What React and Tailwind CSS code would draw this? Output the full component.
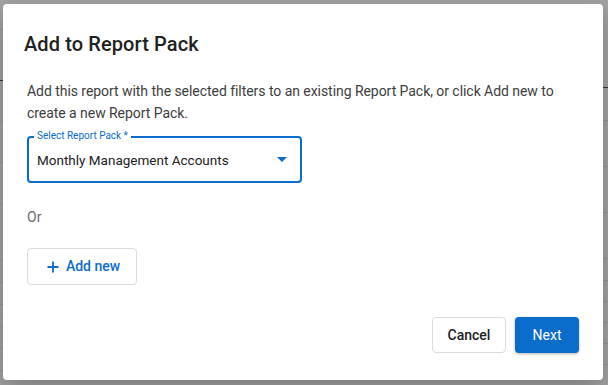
import React from "react";

function CaretDown() {
  return (
    <svg width="10" height="5" viewBox="0 0 10 5" className="block">
      <path d="M0 0 L10 0 L5 5 Z" fill="#0a6ccb" />
    </svg>
  );
}

// faint table rows of the page behind the dialog
const leftRows = [30, 51, 41, 41, 42, 56, 22, 22, 22, 22, 22];
const rightRows = [88, 33, 46, 46, 46, 22, 21, 21, 21, 21, 21];

function Backdrop() {
  return (
    <div className="absolute inset-0 bg-[#a3a3a3] flex flex-col">
      <div className="flex h-[4px] overflow-hidden text-[13px] leading-[13px] text-[#2e2e3a]">
        <div className="w-[395px] pl-[250px] -mt-[9px] border-r border-[#8e8e8e]">Feb 23</div>
        <div className="pl-[84px] -mt-[9px]">Mar 23</div>
      </div>
      <div className="flex flex-1 justify-between">
        <div className="w-[3px] flex flex-col">
          {leftRows.map((h, i) => (
            <div
              key={i}
              className={i === 1 ? "border-b border-[#30304a]" : "border-b border-[#959595]"}
              style={{ height: h }}
            />
          ))}
        </div>
        <div className="w-[6px] flex flex-col">
          {rightRows.map((h, i) => (
            <div
              key={i}
              className={i === 0 ? "border-b border-[#30304a]" : "border-b border-[#959595]"}
              style={{ height: h }}
            />
          ))}
        </div>
      </div>
    </div>
  );
}

export default function App() {
  return (
    <div className="relative w-[608px] h-[385px] overflow-hidden font-['Roboto',sans-serif]">
      <Backdrop />

      {/* Dialog */}
      <div className="absolute left-[3px] top-[4px] w-[600px] h-[376px] bg-white rounded-[4px] shadow-[0_8px_24px_rgba(0,0,0,0.25)] flex flex-col">
        <h2 className="pl-[21px] pt-[24px] text-[20px] leading-[32px] font-medium text-[#212121] tracking-[0.1px]">
          Add to Report Pack
        </h2>

        <div className="px-[24px] mt-[20px] flex flex-col items-start">
          <p className="text-[14px] leading-[22px] text-[#3d3d3d] tracking-[-0.05px] pr-[16px]">
            Add this report with the selected filters to an existing Report Pack, or click Add new to
            create a new Report Pack.
          </p>

          {/* Select */}
          <div className="relative mt-[12px] w-[275px] h-[47px] border-2 border-[#0a6ccb] rounded-[4px] flex items-center pl-[8px] pr-[13px]">
            <span className="absolute left-[5px] top-[-8px] bg-white px-[3px] text-[10px] leading-[12px] text-[#0a6ccb]">
              Select Report Pack *
            </span>
            <span className="flex-1 text-[13.5px] text-[#212121] pt-[2px]">Monthly Management Accounts</span>
            <CaretDown />
          </div>

          <div className="mt-[23px] text-[14px] leading-[22px] text-[#6b6b6b]">Or</div>

          <button className="mt-[20px] w-[110px] h-[37px] border border-[#dcdcdc] rounded-[4px] flex items-center justify-center gap-[7px] pl-[3px] text-[14px] font-medium text-[#0a6ccb]">
            <svg width="12" height="12" viewBox="0 0 12 12" className="block">
              <path d="M6 0.5 V11.5 M0.5 6 H11.5" stroke="#0a6ccb" strokeWidth="1.8" />
            </svg>
            <span>Add new</span>
          </button>
        </div>

        <div className="mt-[32px] pr-[24px] flex justify-end gap-[9px]">
          <button className="w-[74px] h-[36px] border border-[#dcdcdc] rounded-[4px] text-[14px] font-medium text-[#212121]">
            Cancel
          </button>
          <button className="w-[64px] h-[36px] rounded-[4px] bg-[#0a6ccb] text-[14px] text-white shadow-[0_1px_3px_rgba(0,0,0,0.3)]">
            Next
          </button>
        </div>
      </div>
    </div>
  );
}
